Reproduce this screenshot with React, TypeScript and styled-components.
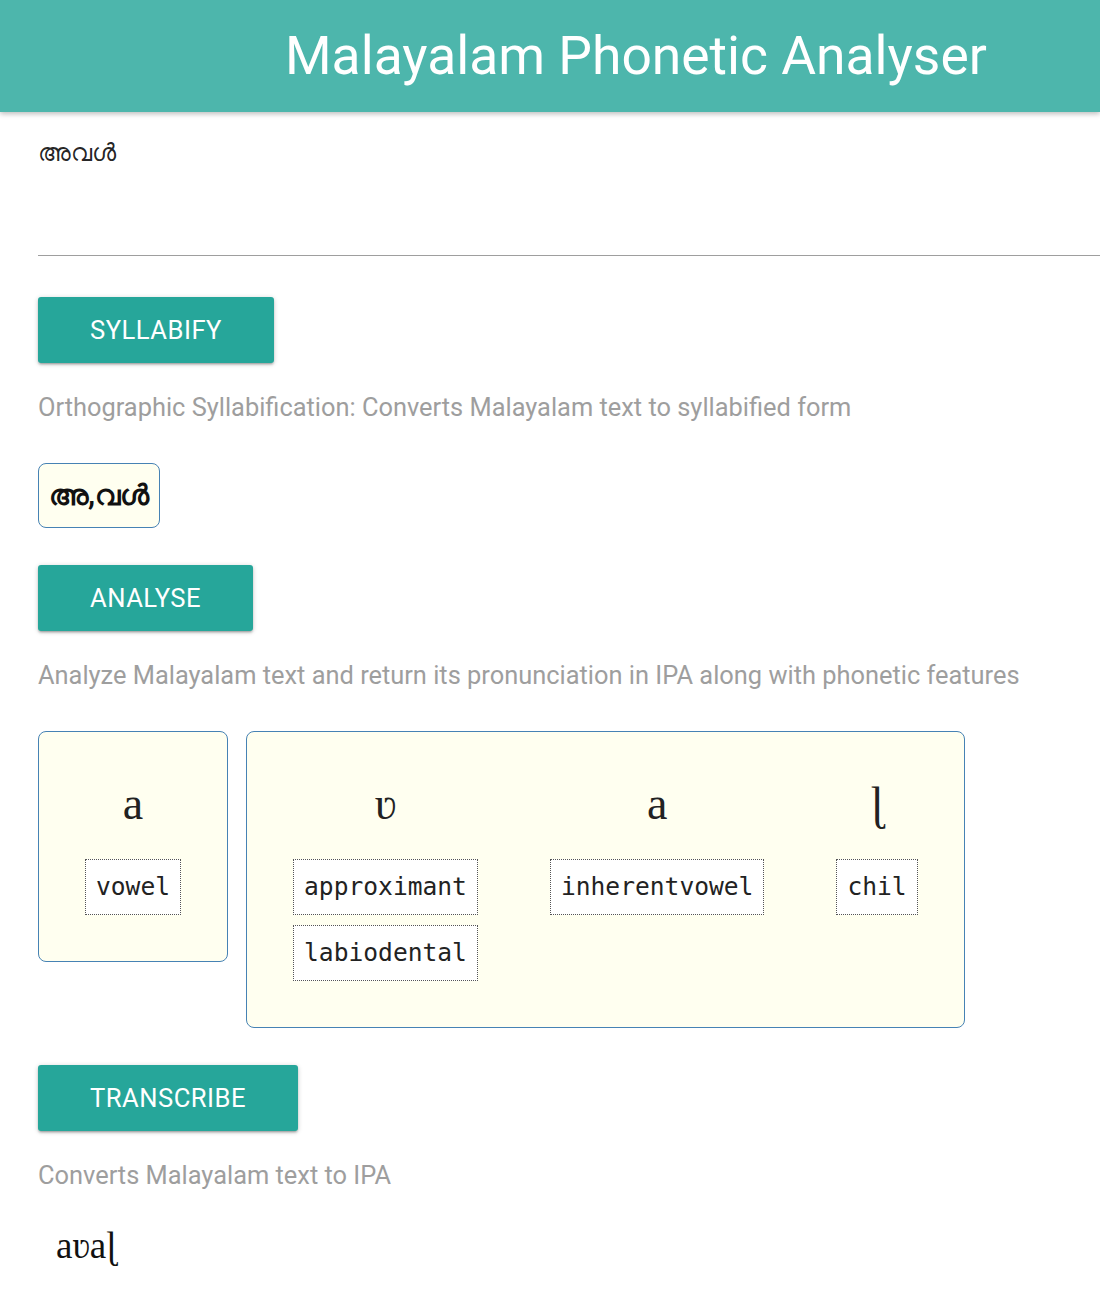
import React from 'react'
import styled, { createGlobalStyle } from 'styled-components'

const GlobalStyle = createGlobalStyle`
  body {
    margin: 0;
    font-family: Roboto, 'Noto Sans', sans-serif;
    background: #fff;
    color: rgba(0, 0, 0, 0.87);
  }
`

const Header = styled.header`
  height: 112px;
  background: #4db6ac;
  box-shadow: 0 2px 5px 0 rgba(0, 0, 0, 0.26);
`

const Title = styled.h1`
  margin: 0;
  padding-left: 285px;
  font-size: 53.4px;
  font-weight: 400;
  line-height: 112px;
  color: #fff;
  white-space: nowrap;
`

const Main = styled.main`
  padding: 0 0 40px 38px;
`

const Input = styled.textarea`
  display: block;
  box-sizing: border-box;
  width: 100%;
  height: 120px;
  margin-top: 24px;
  padding: 2px 0;
  border: none;
  border-bottom: 1px solid #9e9e9e;
  outline: none;
  resize: none;
  font-family: Roboto, 'Noto Sans', sans-serif;
  font-size: 24px;
  line-height: 30px;
  color: rgba(0, 0, 0, 0.87);
  background: transparent;
`

const Button = styled.button<{ $top: number }>`
  display: block;
  height: 66px;
  margin-top: ${(p) => p.$top}px;
  padding: 0 52px;
  border: none;
  border-radius: 3px;
  background: #26a69a;
  color: #fff;
  font-family: Roboto, sans-serif;
  font-size: 25.6px;
  letter-spacing: 0.5px;
  text-transform: uppercase;
  box-shadow: 0 2px 2px 0 rgba(0, 0, 0, 0.14), 0 3px 1px -2px rgba(0, 0, 0, 0.12),
    0 1px 5px 0 rgba(0, 0, 0, 0.2);
  cursor: pointer;
`

const Description = styled.p`
  margin: 26px 0 0;
  font-size: 25.4px;
  line-height: 36px;
  color: #9e9e9e;
`

const SyllableBox = styled.div`
  display: inline-block;
  margin-top: 38px;
  padding: 10px 10px;
  border: 1px solid #4682b4;
  border-radius: 8px;
  background: #fffff0;
  font-size: 29px;
  font-weight: 700;
  line-height: 43px;
  color: #111;
`

const Cards = styled.div`
  display: flex;
  align-items: flex-start;
  gap: 18px;
  margin-top: 38px;
`

const Card = styled.div`
  display: flex;
  padding: 10px;
  border: 1px solid #4682b4;
  border-radius: 8px;
  background: #fffff0;
`

const Phoneme = styled.div`
  display: flex;
  flex-direction: column;
  align-items: center;
  padding: 32px 36px 36px;
`

const Ipa = styled.div`
  font-family: 'Liberation Serif', 'DejaVu Serif', serif;
  font-size: 46px;
  line-height: 60px;
  color: #222;
  margin-bottom: 25px;
`

const Tags = styled.div`
  display: flex;
  flex-direction: column;
  gap: 10px;
`

const Tag = styled.span`
  padding: 10px 10px;
  border: 1px dotted #555;
  background: #fff;
  font-family: 'DejaVu Sans Mono', 'Liberation Mono', monospace;
  font-size: 24.6px;
  line-height: 34px;
  color: #222;
`

const Transcription = styled.div`
  margin-top: 28px;
  padding-left: 18px;
  font-family: 'Liberation Serif', 'DejaVu Serif', serif;
  font-size: 37px;
  line-height: 50px;
  color: #111;
`

type Unit = { ipa: string; features: string[] }

const groups: Unit[][] = [
  [{ ipa: 'a', features: ['vowel'] }],
  [
    { ipa: 'ʋ', features: ['approximant', 'labiodental'] },
    { ipa: 'a', features: ['inherentvowel'] },
    { ipa: 'ɭ', features: ['chil'] },
  ],
]

export default function App() {
  return (
    <>
      <GlobalStyle />
      <Header>
        <Title>Malayalam Phonetic Analyser</Title>
      </Header>
      <Main>
        <Input defaultValue="അവൾ" />

        <Button $top={41}>Syllabify</Button>
        <Description>
          Orthographic Syllabification: Converts Malayalam text to syllabified form
        </Description>
        <SyllableBox>അ,വൾ</SyllableBox>

        <Button $top={37}>Analyse</Button>
        <Description>
          Analyze Malayalam text and return its pronunciation in IPA along with phonetic features
        </Description>
        <Cards>
          {groups.map((group, i) => (
            <Card key={i}>
              {group.map((unit, j) => (
                <Phoneme key={j}>
                  <Ipa>{unit.ipa}</Ipa>
                  <Tags>
                    {unit.features.map((f) => (
                      <Tag key={f}>{f}</Tag>
                    ))}
                  </Tags>
                </Phoneme>
              ))}
            </Card>
          ))}
        </Cards>

        <Button $top={37}>Transcribe</Button>
        <Description>Converts Malayalam text to IPA</Description>
        <Transcription>aʋaɭ</Transcription>
      </Main>
    </>
  )
}
